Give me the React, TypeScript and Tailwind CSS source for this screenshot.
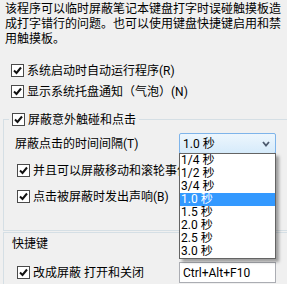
import React from "react";

function Check() {
  return (
    <span className="flex h-[13px] w-[13px] shrink-0 items-center justify-center border border-[#4a4a4a] bg-white">
      <svg width="9" height="9" viewBox="0 0 9 9">
        <path d="M1 4.5 L3.5 7 L8 1.5" fill="none" stroke="#111" strokeWidth="2" />
      </svg>
    </span>
  );
}

const items = ["1/4 秒", "1/2 秒", "3/4 秒", "1.0 秒", "1.5 秒", "2.0 秒", "2.5 秒", "3.0 秒"];

export default function App() {
  return (
    <div className="relative h-[284px] w-[287px] overflow-hidden bg-[#f0f0f0] font-['Roboto','Noto_Sans_CJK_SC',sans-serif] text-[12px] text-black">
      <div className="whitespace-nowrap pl-[5px] pt-[2px] leading-[15px]">
        <div>该程序可以临时屏蔽笔记本键盘打字时误碰触摸板造</div>
        <div>成打字错行的问题。也可以使用键盘快捷键启用和禁</div>
        <div>用触摸板。</div>
      </div>

      <div className="mt-[13px] pl-[11px]">
        <div className="flex h-[21px] items-center gap-[3px] whitespace-nowrap">
          <Check />
          <span>系统启动时自动运行程序(R)</span>
        </div>
        <div className="flex h-[21px] items-center gap-[3px] whitespace-nowrap">
          <Check />
          <span>显示系统托盘通知（气泡）(N)</span>
        </div>
      </div>

      <div className="ml-[3px] mt-[17px] box-border h-[112px] w-[300px] border border-[#d5dfe5]">
        <div className="-mt-[11px] ml-[5px] flex h-[21px] w-fit items-center gap-[3px] whitespace-nowrap bg-[#f0f0f0] px-[3px]">
          <Check />
          <span>屏蔽意外触碰和点击</span>
        </div>
        <div className="mt-[3px] flex h-[21px] items-center">
          <div className="w-[175px] whitespace-nowrap pl-[11px]">屏蔽点击的时间间隔(T)</div>
          <div className="flex h-[21px] w-[97px] items-center justify-between rounded-[2px] border border-[#7eb4ea] bg-gradient-to-b from-[#edf6fd] to-[#d6ebfb] pl-[3px] pr-[5px]">
            <span>1.0 秒</span>
            <svg width="8" height="6" viewBox="0 0 8 6">
              <path d="M1 1 L4 4.5 L7 1" fill="none" stroke="#4d5a6e" strokeWidth="1.8" />
            </svg>
          </div>
        </div>
        <div className="mt-[6px] flex h-[21px] items-center gap-[3px] whitespace-nowrap pl-[13px]">
          <Check />
          <span>并且可以屏蔽移动和滚轮事件</span>
        </div>
        <div className="mt-[5px] flex h-[21px] items-center gap-[3px] whitespace-nowrap pl-[13px]">
          <Check />
          <span>点击被屏蔽时发出声响(B)</span>
        </div>
      </div>

      <div className="ml-[3px] mt-[1px] h-[60px] w-[300px] border-l border-t border-[#d5dfe5]">
        <div className="pl-[8px] pt-[4px] leading-[15px]">快捷键</div>
        <div className="mt-[10px] flex h-[21px] items-center">
          <div className="flex w-[175px] items-center gap-[3px] whitespace-nowrap pl-[13px]">
            <Check />
            <span>改成屏蔽 打开和关闭</span>
          </div>
          <div className="flex h-[21px] w-[97px] items-center border border-[#abadb3] bg-white pl-[3px]">
            Ctrl+Alt+F10
          </div>
        </div>
      </div>

      <div className="absolute left-[179px] top-[153px] w-[97px] border border-[#646464] bg-white shadow-[3px_3px_3px_rgba(0,0,0,0.35)]">
        {items.map((it, i) => (
          <div
            key={it}
            className={
              i === 3
                ? "h-[13px] overflow-hidden bg-[#3399ff] pl-[1px] leading-[13px] text-white"
                : "h-[13px] overflow-hidden pl-[1px] leading-[13px]"
            }
          >
            {it}
          </div>
        ))}
      </div>
    </div>
  );
}
